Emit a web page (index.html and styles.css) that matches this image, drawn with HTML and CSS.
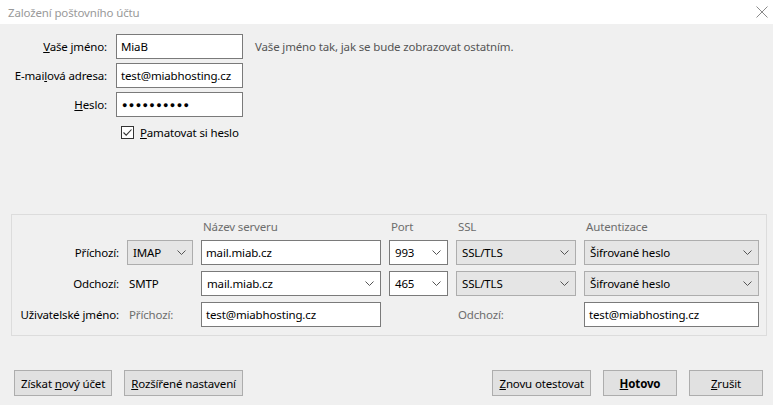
FILE: index.html
```html
<!DOCTYPE html>
<html lang="cs">
<head>
<meta charset="UTF-8">
<title>Založení poštovního účtu</title>
<link rel="stylesheet" href="styles.css">
</head>
<body>
<div class="titlebar">
  <span class="title">Založení poštovního účtu</span>
  <svg class="close" width="12" height="12" viewBox="0 0 12 12"><path d="M0.5 0.5L11.5 11.5M11.5 0.5L0.5 11.5" stroke="#8a8a8a" stroke-width="1" fill="none"/></svg>
</div>
<div class="dialog">
  <div class="identity">
    <span class="lbl"><u>V</u>aše jméno:</span>
    <div class="field">MiaB</div>
    <span class="hint">Vaše jméno tak, jak se bude zobrazovat ostatním.</span>

    <span class="lbl">E-mai<u>l</u>ová adresa:</span>
    <div class="field">test@miabhosting.cz</div>
    <span></span>

    <span class="lbl"><u>H</u>eslo:</span>
    <div class="field pw">●●●●●●●●●●</div>
    <span></span>

    <span></span>
    <div class="check">
      <svg width="13" height="13" viewBox="0 0 13 13"><rect x="0.5" y="0.5" width="12" height="12" fill="#fff" stroke="#333"/><path d="M2.5 6.5L5.2 9.2L10.5 3.5" stroke="#333" stroke-width="1.1" fill="none"/></svg>
      <span><u>P</u>amatovat si heslo</span>
    </div>
  </div>

  <div class="servers">
    <span></span>
    <span></span>
    <span class="head">Název serveru</span>
    <span class="head">Port</span>
    <span class="head">SSL</span>
    <span class="head">Autentizace</span>

    <span class="lbl">Příchozí:</span>
    <div class="combo grey">IMAP<svg class="chev" width="9" height="5" viewBox="0 0 9 5"><path d="M0.5 0.5L4.5 4.5L8.5 0.5" stroke="#555" fill="none"/></svg></div>
    <div class="field">mail.miab.cz</div>
    <div class="combo white">993<svg class="chev" width="9" height="5" viewBox="0 0 9 5"><path d="M0.5 0.5L4.5 4.5L8.5 0.5" stroke="#555" fill="none"/></svg></div>
    <div class="combo grey">SSL/TLS<svg class="chev" width="9" height="5" viewBox="0 0 9 5"><path d="M0.5 0.5L4.5 4.5L8.5 0.5" stroke="#555" fill="none"/></svg></div>
    <div class="combo grey">Šifrované heslo<svg class="chev" width="9" height="5" viewBox="0 0 9 5"><path d="M0.5 0.5L4.5 4.5L8.5 0.5" stroke="#555" fill="none"/></svg></div>

    <span class="lbl">Odchozí:</span>
    <span class="plain">SMTP</span>
    <div class="combo white">mail.miab.cz<svg class="chev" width="9" height="5" viewBox="0 0 9 5"><path d="M0.5 0.5L4.5 4.5L8.5 0.5" stroke="#555" fill="none"/></svg></div>
    <div class="combo white">465<svg class="chev" width="9" height="5" viewBox="0 0 9 5"><path d="M0.5 0.5L4.5 4.5L8.5 0.5" stroke="#555" fill="none"/></svg></div>
    <div class="combo grey">SSL/TLS<svg class="chev" width="9" height="5" viewBox="0 0 9 5"><path d="M0.5 0.5L4.5 4.5L8.5 0.5" stroke="#555" fill="none"/></svg></div>
    <div class="combo grey">Šifrované heslo<svg class="chev" width="9" height="5" viewBox="0 0 9 5"><path d="M0.5 0.5L4.5 4.5L8.5 0.5" stroke="#555" fill="none"/></svg></div>

    <span class="lbl">Uživatelské jméno:</span>
    <span class="plain dim">Příchozí:</span>
    <div class="field">test@miabhosting.cz</div>
    <span></span>
    <span class="plain dim">Odchozí:</span>
    <div class="field">test@miabhosting.cz</div>
  </div>

  <div class="actions">
    <button>Získat <u>n</u>ový účet</button>
    <button><u>R</u>ozšířené nastavení</button>
    <span class="spacer"></span>
    <button><u>Z</u>novu otestovat</button>
    <button class="default"><u>H</u>otovo</button>
    <button><u>Z</u>rušit</button>
  </div>
</div>
</body>
</html>
```

FILE: styles.css
```css
body {
  margin: 0;
  font-family: "Noto Sans", "Open Sans", sans-serif;
  font-size: 11.5px;
  letter-spacing: -0.15px;
  color: #000;
  background-color: #f0f0f0;
}
.titlebar {
  height: 24px;
  background-color: #fff;
  display: flex;
  align-items: center;
  justify-content: space-between;
  padding: 0 5px 0 8px;
}
.title {
  color: #999;
}
.close {
  display: block;
  margin-top: -1px;
}
.dialog {
  padding: 10px 6px 0 11px;
}
.identity {
  display: grid;
  grid-template-columns: 96px 127px auto;
  grid-template-rows: 25px 25px 25px 22px;
  column-gap: 9px;
  row-gap: 4px;
  align-items: center;
}
.identity .hint {
  margin-left: 3px;
  color: #555;
}
.lbl {
  text-align: right;
  white-space: nowrap;
}
.field {
  height: 25px;
  box-sizing: border-box;
  background-color: #fff;
  border: 1px solid #7a7a7a;
  padding: 0 4px;
  display: flex;
  align-items: center;
  white-space: nowrap;
  overflow: hidden;
}
.field.pw {
  font-size: 9px;
  letter-spacing: 1.4px;
  padding-left: 5px;
}
.check {
  grid-column: 2 / 4;
  display: flex;
  align-items: center;
  gap: 6px;
  padding-left: 5px;
}
.check svg {
  display: block;
}
.servers {
  margin-top: 71px;
  border: 1px solid #dcdcdc;
  padding: 3px 6px 8px 8px;
  display: grid;
  grid-template-columns: 99px 66px 180px 59px 120px 175px;
  grid-template-rows: 16px 25px 25px 25px;
  column-gap: 8px;
  row-gap: 6px;
  align-items: center;
}
.head {
  color: #6d6d6d;
  padding-left: 2px;
}
.plain {
  padding-left: 2px;
}
.dim {
  color: #6d6d6d;
}
.combo {
  height: 25px;
  box-sizing: border-box;
  display: flex;
  align-items: center;
  justify-content: space-between;
  padding: 0 6px 0 5px;
  white-space: nowrap;
}
.combo.grey {
  background-color: #e5e5e5;
  border: 1px solid #adadad;
}
.combo.white {
  background-color: #fff;
  border: 1px solid #7a7a7a;
}
.chev {
  display: block;
  flex-shrink: 0;
}
.actions {
  display: flex;
  gap: 12px;
  margin-top: 34px;
  padding: 0 4px 0 3px;
}
.spacer {
  flex: 1;
}
button {
  height: 26px;
  min-width: 74px;
  padding: 0 6px;
  font-family: inherit;
  font-size: 11.5px;
  letter-spacing: -0.15px;
  color: #000;
  background-color: #e1e1e1;
  border: 1px solid #adadad;
  border-radius: 0;
}
button.default {
  font-weight: bold;
}
```
